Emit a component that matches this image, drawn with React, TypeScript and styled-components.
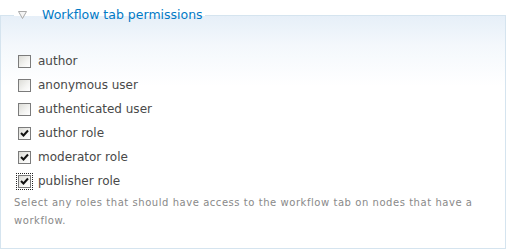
import React from 'react';
import styled, { createGlobalStyle } from 'styled-components';

const GlobalStyle = createGlobalStyle`
  html, body {
    margin: 0;
    padding: 0;
    background: #fff;
  }
  body {
    font-family: "DejaVu Sans", Verdana, sans-serif;
    font-size: 12px;
    color: #494949;
  }
`;

const Page = styled.div`
  width: 507px;
  height: 250px;
  padding-top: 8px;
  box-sizing: border-box;
`;

const Fieldset = styled.fieldset`
  margin: 0;
  width: 506px;
  height: 241px;
  box-sizing: border-box;
  padding: 12px 13px 0 13px;
  border: 1px solid #d5e4ef;
  background: linear-gradient(to bottom, #e6eff8 0px, #f4f8fc 30px, #fff 70px);
`;

const Legend = styled.legend`
  display: flex;
  align-items: center;
  gap: 15px;
  padding: 0 2px 0 4px;
  font-size: 12.5px;
  color: #027ac6;
  line-height: 14px;
`;

const Arrow = () => (
  <svg width="9" height="8" viewBox="0 0 9 8">
    <path d="M0.5 0.5 H8.5 L4.5 7.5 Z" fill="#f4f4f4" stroke="#a9a9a9" strokeWidth="1" />
  </svg>
);

const List = styled.div`
  display: flex;
  flex-direction: column;
  margin-top: 15px;
`;

const Row = styled.label`
  display: flex;
  align-items: center;
  height: 24px;
  font-size: 12px;
  color: #494949;
`;

const Box = styled.span<{ $focused?: boolean }>`
  position: relative;
  display: inline-flex;
  align-items: center;
  justify-content: center;
  width: 13px;
  height: 13px;
  box-sizing: border-box;
  margin: 0 7px 0 4px;
  border: 1px solid #7b7b7b;
  background: linear-gradient(135deg, #dcdcd7 0%, #f4f4f2 60%, #ffffff 100%);
  outline: ${p => (p.$focused ? '1px dotted #222' : 'none')};
  outline-offset: 1px;
`;

const Check = () => (
  <svg width="9" height="9" viewBox="0 0 9 9">
    <path d="M1 4 L3.5 6.5 L8 1.5" fill="none" stroke="#111" strokeWidth="2" />
  </svg>
);

const Description = styled.div`
  margin-top: 1px;
  font-size: 10px;
  line-height: 18px;
  color: #898989;
  letter-spacing: 0.55px;
`;

const roles = [
  { name: 'author', checked: false },
  { name: 'anonymous user', checked: false },
  { name: 'authenticated user', checked: false },
  { name: 'author role', checked: true },
  { name: 'moderator role', checked: true },
  { name: 'publisher role', checked: true, focused: true },
];

const App = () => (
  <Page>
    <GlobalStyle />
    <Fieldset>
      <Legend>
        <Arrow />
        Workflow tab permissions
      </Legend>
      <List>
        {roles.map(r => (
          <Row key={r.name}>
            <Box $focused={r.focused}>{r.checked && <Check />}</Box>
            {r.name}
          </Row>
        ))}
      </List>
      <Description>
        Select any roles that should have access to the workflow tab on nodes that have a workflow.
      </Description>
    </Fieldset>
  </Page>
);

export default App;
